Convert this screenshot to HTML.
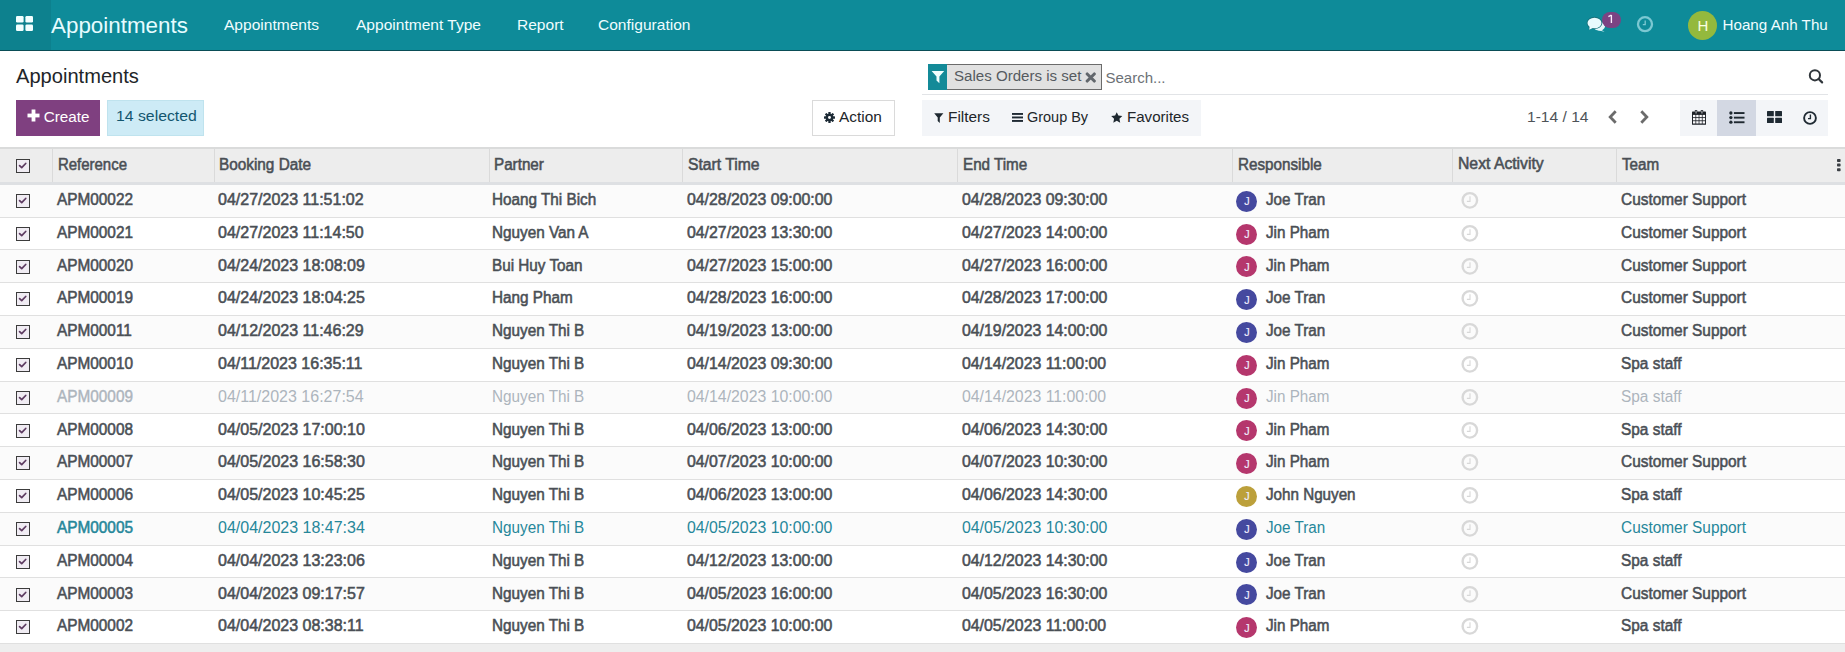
<!DOCTYPE html>
<html><head><meta charset="utf-8"><style>
*{box-sizing:border-box;margin:0;padding:0}
html,body{width:1845px;height:652px;overflow:hidden;background:#fff;font-family:"Liberation Sans",sans-serif;color:#4c4c4c;position:relative}
.abs{position:absolute}
.t{position:absolute;white-space:nowrap;transform-origin:0 0}
.nt{color:#f0fdff}
#nav{position:absolute;left:0;top:0;width:1845px;height:51px;background:#0e8b99;border-bottom:1px solid #0a4d56}
#apps{position:absolute;left:0;top:0;width:51px;height:50px;background:#0d818e}
#thead{position:absolute;left:0;top:147px;width:1845px;height:38px;background:#ededed;border-top:2px solid #dadbdb;border-bottom:3px solid #dee0e3}
.sep{position:absolute;top:149px;width:1px;height:33px;background:#dadada}
.row{position:absolute;left:0;width:1845px;background:#fff;border-bottom:1px solid #e0e0e0;box-sizing:content-box}
.row.odd{background:#fbfbfb}
.c{color:#4a4f55;-webkit-text-stroke:0.55px #4a4f55}
.dt{letter-spacing:0px}
.cb{position:absolute;left:16px;width:14px;height:14px}
.cb svg{display:block}
.av{position:absolute;left:1235.85px;width:21px;height:21px;border-radius:50%}
.avj{color:#f0efff;-webkit-text-stroke:0.15px #f0efff}
.avb{background:#45499f}.avr{background:#b5376d}.avy{background:#bca03b}
.clk{position:absolute;left:1461px;width:18px;height:18px}
.clk svg{display:block}
.row.muted .c{color:#adb5bd;-webkit-text-stroke:0}
.row.info .c{color:#26879a;-webkit-text-stroke:0}
.row.info .c1{-webkit-text-stroke:0.55px #26879a}
.row.muted .c1{-webkit-text-stroke:0.4px #adb5bd}
#bottom{position:absolute;left:0;top:644px;width:1845px;height:8px;background:#eeeeee}
</style></head><body>
<div id="nav"></div><div id="apps"><svg class="abs" style="left:16px;top:16px" width="17" height="15" viewBox="0 0 17 15"><rect x="0" y="0" width="7.6" height="6.6" rx="1.3" fill="#f2ffff"/><rect x="9.4" y="0" width="7.6" height="6.6" rx="1.3" fill="#f2ffff"/><rect x="0" y="8.4" width="7.6" height="6.6" rx="1.3" fill="#f2ffff"/><rect x="9.4" y="8.4" width="7.6" height="6.6" rx="1.3" fill="#f2ffff"/></svg></div>
<div class="t nt" style="left:51px;top:14.83px;font-size:22.4px;line-height:22.4px;color:#e6fcff">Appointments</div>
<div class="t nt" style="left:224.3px;top:17.81px;font-size:14.4px;line-height:14.4px;transform:scaleX(1.08);">Appointments</div>
<div class="t nt" style="left:356.3px;top:17.81px;font-size:14.4px;line-height:14.4px;transform:scaleX(1.08);">Appointment Type</div>
<div class="t nt" style="left:517.3px;top:17.81px;font-size:14.4px;line-height:14.4px;transform:scaleX(1.08);">Report</div>
<div class="t nt" style="left:598.3px;top:17.81px;font-size:14.4px;line-height:14.4px;transform:scaleX(1.08);">Configuration</div>
<svg class="abs" style="left:1585px;top:15px" width="22" height="18" viewBox="0 0 22 18"><ellipse cx="14.2" cy="11.2" rx="5.8" ry="4.4" fill="#e3f8fb"/><path d="M15.5 14.5 L19.6 16.8 L12.5 15.2 Z" fill="#e3f8fb"/><ellipse cx="9.5" cy="7.95" rx="7.9" ry="6.1" fill="#17707a"/><path d="M3.6 11 L3.9 15.1 L9.5 12.6 Z" fill="#17707a"/><ellipse cx="9.5" cy="7.95" rx="7" ry="5.25" fill="#e8fafd"/><path d="M4.6 11.5 L4.2 14.7 L8.8 12.6 Z" fill="#e8fafd"/></svg>
<div class="abs" style="left:1601.5px;top:12px;width:19px;height:15.5px;border-radius:8px;background:#7c4383"></div>
<svg class="abs" style="left:1606px;top:14px" width="8" height="10" viewBox="0 0 8 10"><path d="M5.4 0.9 V9.1 M5.4 1 L2.4 2.6" fill="none" stroke="#fbeafb" stroke-width="1.35"/></svg>
<svg class="abs" style="left:1636px;top:15px" width="18" height="18" viewBox="0 0 18 18"><circle cx="9" cy="9.2" r="7" fill="none" stroke="#7cc8d2" stroke-width="2.3"/><path d="M9.2 5.5 V9.6 H6.8" fill="none" stroke="#7cc8d2" stroke-width="1.3"/></svg>
<div class="abs" style="left:1688px;top:11px;width:29px;height:29px;border-radius:50%;background:#94b93d"></div>
<div class="t nt" style="left:1697.5px;top:18.20px;font-size:15px;line-height:15px;color:#fbffe0">H</div>
<div class="t nt" style="left:1722.5px;top:16.93px;font-size:15.2px;line-height:15.2px;">Hoang Anh Thu</div>
<div class="t " style="left:16px;top:65.98px;font-size:20.1px;line-height:20.1px;color:#212529">Appointments</div>
<div class="abs" style="left:16px;top:100px;width:84px;height:36px;background:#7f4080"></div>
<svg class="abs" style="left:27px;top:109px" width="13" height="13" viewBox="0 0 13 13"><rect x="4.6" y="0.5" width="3.8" height="12" fill="#fff"/><rect x="0.5" y="4.6" width="12" height="3.8" fill="#fff"/></svg>
<div class="t " style="left:43.8px;top:109.03px;font-size:15.2px;line-height:15.2px;color:#fff">Create</div>
<div class="abs" style="left:107px;top:100px;width:97px;height:36px;background:#cdebf6;border:1px solid #bfe3ee"></div>
<div class="t " style="left:116.2px;top:108.43px;font-size:15.2px;line-height:15.2px;transform:scaleX(1.04);color:#13566f">14 selected</div>
<div class="abs" style="left:812px;top:100px;width:83px;height:36px;background:#fff;border:1px solid #dadada"></div>
<svg class="abs" style="left:824px;top:112px" width="11" height="11" viewBox="0 0 12 12"><g fill="#1d2b36"><circle cx="6" cy="6" r="4.1"/><rect x="4.7" y="0" width="2.6" height="12" rx="0.6"/><rect x="0" y="4.7" width="12" height="2.6" rx="0.6"/><rect x="4.7" y="0" width="2.6" height="12" rx="0.6" transform="rotate(45 6 6)"/><rect x="4.7" y="0" width="2.6" height="12" rx="0.6" transform="rotate(-45 6 6)"/></g><circle cx="6" cy="6" r="1.6" fill="#fff"/></svg>
<div class="t " style="left:839px;top:108.76px;font-size:15.4px;line-height:15.4px;color:#212529">Action</div>
<div class="abs" style="left:922px;top:94px;width:906px;height:1px;background:#e2e4e7"></div>
<div class="abs" style="left:928px;top:64px;width:174px;height:26px;background:#e1e1e1;border:1px solid #6b6b6b;border-left:0"></div>
<div class="abs" style="left:928px;top:64px;width:19px;height:26px;background:#138a98"></div>
<svg class="abs" style="left:931px;top:70px" width="14" height="14" viewBox="0 0 14 14"><path d="M0.6 1 H13.2 L8.4 6.4 V13.2 L5.5 10.4 V6.4 Z" fill="#f0ffff"/></svg>
<div class="t " style="left:953.5px;top:67.96px;font-size:15.4px;line-height:15.4px;transform:scaleX(0.98);color:#555a5f">Sales Orders is set</div>
<svg class="abs" style="left:1085px;top:71.5px" width="11.5" height="11" viewBox="0 0 11.5 11"><path d="M2.2 2 L9.3 9 M9.3 2 L2.2 9" stroke="#62676c" stroke-width="3.1" stroke-linecap="round"/></svg>
<div class="t " style="left:1105.5px;top:69.90px;font-size:15px;line-height:15px;color:#6c7176">Search...</div>
<svg class="abs" style="left:1807px;top:67px" width="18" height="18" viewBox="0 0 18 18"><circle cx="7.9" cy="8.3" r="5.1" fill="none" stroke="#30363b" stroke-width="2"/><path d="M11.6 12 L15.1 15.4" stroke="#30363b" stroke-width="2.2" stroke-linecap="round"/></svg>
<div class="abs" style="left:922px;top:100px;width:279px;height:36px;background:#f3f5f8"></div>
<svg class="abs" style="left:933.5px;top:112.8px" width="10" height="10" viewBox="0 0 10 10"><path d="M0.2 0.2 H9.4 L5.8 4.6 V9.9 L3.7 7.9 V4.6 Z" fill="#1e2830"/></svg>
<div class="t " style="left:948px;top:108.66px;font-size:15.4px;line-height:15.4px;color:#212529">Filters</div>
<svg class="abs" style="left:1012px;top:113px" width="11" height="9" viewBox="0 0 11 9"><rect x="0" y="0" width="11" height="1.9" fill="#1f2a33"/><rect x="0" y="3.5" width="11" height="1.9" fill="#1f2a33"/><rect x="0" y="7" width="11" height="1.9" fill="#1f2a33"/></svg>
<div class="t " style="left:1027px;top:108.75px;font-size:15.3px;line-height:15.3px;transform:scaleX(0.945);color:#212529">Group By</div>
<svg class="abs" style="left:1111px;top:111.6px" width="11.5" height="11" viewBox="0 0 24 23"><path d="M12 0.3 L15.4 7.3 L23.6 8.3 L17.6 13.9 L19.2 22.4 L12 18.3 L4.8 22.4 L6.4 13.9 L0.4 8.3 L8.6 7.3 Z" fill="#1e2830"/></svg>
<div class="t " style="left:1126.7px;top:108.66px;font-size:15.4px;line-height:15.4px;transform:scaleX(0.98);color:#212529">Favorites</div>
<div class="t " style="left:1526.8px;top:108.93px;font-size:15.2px;line-height:15.2px;transform:scaleX(1.025);color:#4e5358">1-14 / 14</div>
<svg class="abs" style="left:1607px;top:110px" width="11" height="14" viewBox="0 0 11 14"><path d="M8.7 1.3 L3.2 7 L8.7 12.7" fill="none" stroke="#6b6b6b" stroke-width="2.8"/></svg>
<svg class="abs" style="left:1639px;top:110px" width="11" height="14" viewBox="0 0 11 14"><path d="M2.3 1.3 L7.8 7 L2.3 12.7" fill="none" stroke="#6b6b6b" stroke-width="2.8"/></svg>
<div class="abs" style="left:1680px;top:100px;width:148px;height:36px;background:#f3f5f8"></div>
<div class="abs" style="left:1717px;top:100px;width:39px;height:36px;background:#d3d8e3"></div>
<svg class="abs" style="left:1692px;top:110px" width="14" height="15" viewBox="0 0 14 15"><rect x="0" y="1.6" width="14" height="13.2" rx="0.6" fill="#1e2228"/><rect x="1.0" y="4.9" width="2.45" height="2.3" fill="#fbfbfd"/><rect x="1.0" y="8.05" width="2.45" height="2.3" fill="#fbfbfd"/><rect x="1.0" y="11.2" width="2.45" height="2.3" fill="#fbfbfd"/><rect x="4.2" y="4.9" width="2.45" height="2.3" fill="#fbfbfd"/><rect x="4.2" y="8.05" width="2.45" height="2.3" fill="#fbfbfd"/><rect x="4.2" y="11.2" width="2.45" height="2.3" fill="#fbfbfd"/><rect x="7.4" y="4.9" width="2.45" height="2.3" fill="#fbfbfd"/><rect x="7.4" y="8.05" width="2.45" height="2.3" fill="#fbfbfd"/><rect x="7.4" y="11.2" width="2.45" height="2.3" fill="#fbfbfd"/><rect x="10.6" y="4.9" width="2.45" height="2.3" fill="#fbfbfd"/><rect x="10.6" y="8.05" width="2.45" height="2.3" fill="#fbfbfd"/><rect x="10.6" y="11.2" width="2.45" height="2.3" fill="#fbfbfd"/><rect x="2.9" y="0" width="2.3" height="3.8" rx="0.6" fill="#1e2228"/><rect x="8.8" y="0" width="2.3" height="3.8" rx="0.6" fill="#1e2228"/><rect x="3.65" y="0.7" width="0.8" height="2.8" fill="#f3f5f8"/><rect x="9.55" y="0.7" width="0.8" height="2.8" fill="#f3f5f8"/></svg>
<svg class="abs" style="left:1728.5px;top:110.5px" width="17" height="14" viewBox="0 0 17 14"><circle cx="1.9" cy="2" r="1.65" fill="#1e2830"/><circle cx="1.9" cy="6.6" r="1.65" fill="#1e2830"/><circle cx="1.9" cy="11.2" r="1.65" fill="#1e2830"/><rect x="4.9" y="1.1" width="10.6" height="1.9" fill="#1e2830"/><rect x="4.9" y="5.7" width="10.6" height="1.9" fill="#1e2830"/><rect x="4.9" y="10.3" width="10.6" height="1.9" fill="#1e2830"/></svg>
<svg class="abs" style="left:1767px;top:111px" width="15" height="12" viewBox="0 0 15 12"><rect x="0" y="0" width="6.8" height="5.3" rx="0.5" fill="#1f2a33"/><rect x="8.2" y="0" width="6.8" height="5.3" rx="0.5" fill="#1f2a33"/><rect x="0" y="6.7" width="6.8" height="5.3" rx="0.5" fill="#1f2a33"/><rect x="8.2" y="6.7" width="6.8" height="5.3" rx="0.5" fill="#1f2a33"/></svg>
<svg class="abs" style="left:1803px;top:110.5px" width="14" height="14" viewBox="0 0 14 14"><circle cx="7" cy="7" r="5.9" fill="none" stroke="#1f2a33" stroke-width="1.9"/><path d="M7.4 3.6 V7.6 H5" fill="none" stroke="#1f2a33" stroke-width="1.4"/></svg>
<div id="thead"></div>
<div class="sep" style="left:52px"></div>
<div class="sep" style="left:214px"></div>
<div class="sep" style="left:489px"></div>
<div class="sep" style="left:682px"></div>
<div class="sep" style="left:957px"></div>
<div class="sep" style="left:1232px"></div>
<div class="sep" style="left:1452px"></div>
<div class="sep" style="left:1616px"></div>
<div class="cb" style="top:159px"><svg width="14" height="14" viewBox="0 0 14 14"><rect x="0.5" y="0.5" width="13" height="13" fill="#f0ecf3" stroke="#3c3c3c" stroke-width="1"/><path d="M3.6 6.6 L5.7 8.6 L9.7 4.5" fill="none" stroke="#5d3b61" stroke-width="1.75" stroke-linecap="round" stroke-linejoin="round"/></svg></div>
<div class="t c" style="left:57.7px;top:157.45px;font-size:16px;line-height:16px;transform:scaleX(0.934);">Reference</div>
<div class="t c" style="left:219px;top:157.45px;font-size:16px;line-height:16px;transform:scaleX(0.958);">Booking Date</div>
<div class="t c" style="left:494.4px;top:157.45px;font-size:16px;line-height:16px;transform:scaleX(0.95);">Partner</div>
<div class="t c" style="left:687.5px;top:157.45px;font-size:16px;line-height:16px;transform:scaleX(0.98);">Start Time</div>
<div class="t c" style="left:962.5px;top:157.45px;font-size:16px;line-height:16px;transform:scaleX(0.95);">End Time</div>
<div class="t c" style="left:1238px;top:157.45px;font-size:16px;line-height:16px;transform:scaleX(0.951);">Responsible</div>
<div class="t c" style="left:1458px;top:156.45px;font-size:16px;line-height:16px;transform:scaleX(0.984);">Next Activity</div>
<div class="t c" style="left:1621.5px;top:157.45px;font-size:16px;line-height:16px;transform:scaleX(0.95);">Team</div>
<svg class="abs" style="left:1836px;top:158px" width="6" height="14" viewBox="0 0 6 14"><rect x="1" y="1" width="3.6" height="3" rx="0.8" fill="#3b3f44"/><rect x="1" y="5.6" width="3.6" height="3" rx="0.8" fill="#3b3f44"/><rect x="1" y="10.2" width="3.6" height="3" rx="0.8" fill="#3b3f44"/></svg>
<div class="row odd" style="top:185px;height:32px"><div class="cb" style="top:9.00px"><svg width="14" height="14" viewBox="0 0 14 14"><rect x="0.5" y="0.5" width="13" height="13" fill="#f0ecf3" stroke="#3c3c3c" stroke-width="1"/><path d="M3.6 6.6 L5.7 8.6 L9.7 4.5" fill="none" stroke="#5d3b61" stroke-width="1.75" stroke-linecap="round" stroke-linejoin="round"/></svg></div><div class="t c c1" style="left:56.5px;top:7.45px;font-size:16px;line-height:16px;transform:scaleX(0.96);">APM00022</div><div class="t c dt" style="left:218px;top:7.45px;font-size:16px;line-height:16px;transform:scaleX(1.0);">04/27/2023 11:51:02</div><div class="t c" style="left:492.2px;top:7.45px;font-size:16px;line-height:16px;transform:scaleX(0.955);">Hoang Thi Bich</div><div class="t c dt" style="left:687px;top:7.45px;font-size:16px;line-height:16px;transform:scaleX(0.99);">04/28/2023 09:00:00</div><div class="t c dt" style="left:962px;top:7.45px;font-size:16px;line-height:16px;transform:scaleX(0.99);">04/28/2023 09:30:00</div><div class="av avb" style="top:5.70px"></div><div class="t avj" style="left:1244.3px;top:11.16px;font-size:10.8px;line-height:10.8px;">J</div><div class="clk" style="top:6.00px"><svg width="18" height="18" viewBox="0 0 18 18"><circle cx="8.85" cy="9.35" r="7.25" fill="none" stroke="#d8d8d8" stroke-width="2.4"/><path d="M9 5.2 V10.4 H5.9" fill="none" stroke="#d8d8d8" stroke-width="1.1"/></svg></div><div class="t c" style="left:1266px;top:7.45px;font-size:16px;line-height:16px;transform:scaleX(0.95);">Joe Tran</div><div class="t c" style="left:1621px;top:7.45px;font-size:16px;line-height:16px;transform:scaleX(0.963);">Customer Support</div></div>
<div class="row" style="top:218px;height:31px"><div class="cb" style="top:8.80px"><svg width="14" height="14" viewBox="0 0 14 14"><rect x="0.5" y="0.5" width="13" height="13" fill="#f0ecf3" stroke="#3c3c3c" stroke-width="1"/><path d="M3.6 6.6 L5.7 8.6 L9.7 4.5" fill="none" stroke="#5d3b61" stroke-width="1.75" stroke-linecap="round" stroke-linejoin="round"/></svg></div><div class="t c c1" style="left:56.5px;top:7.45px;font-size:16px;line-height:16px;transform:scaleX(0.96);">APM00021</div><div class="t c dt" style="left:218px;top:7.45px;font-size:16px;line-height:16px;transform:scaleX(1.0);">04/27/2023 11:14:50</div><div class="t c" style="left:492.2px;top:7.45px;font-size:16px;line-height:16px;transform:scaleX(0.955);">Nguyen Van A</div><div class="t c dt" style="left:687px;top:7.45px;font-size:16px;line-height:16px;transform:scaleX(0.99);">04/27/2023 13:30:00</div><div class="t c dt" style="left:962px;top:7.45px;font-size:16px;line-height:16px;transform:scaleX(0.99);">04/27/2023 14:00:00</div><div class="av avr" style="top:5.50px"></div><div class="t avj" style="left:1244.3px;top:10.96px;font-size:10.8px;line-height:10.8px;">J</div><div class="clk" style="top:5.80px"><svg width="18" height="18" viewBox="0 0 18 18"><circle cx="8.85" cy="9.35" r="7.25" fill="none" stroke="#d8d8d8" stroke-width="2.4"/><path d="M9 5.2 V10.4 H5.9" fill="none" stroke="#d8d8d8" stroke-width="1.1"/></svg></div><div class="t c" style="left:1266px;top:7.45px;font-size:16px;line-height:16px;transform:scaleX(0.95);">Jin Pham</div><div class="t c" style="left:1621px;top:7.45px;font-size:16px;line-height:16px;transform:scaleX(0.963);">Customer Support</div></div>
<div class="row odd" style="top:250px;height:32px"><div class="cb" style="top:9.60px"><svg width="14" height="14" viewBox="0 0 14 14"><rect x="0.5" y="0.5" width="13" height="13" fill="#f0ecf3" stroke="#3c3c3c" stroke-width="1"/><path d="M3.6 6.6 L5.7 8.6 L9.7 4.5" fill="none" stroke="#5d3b61" stroke-width="1.75" stroke-linecap="round" stroke-linejoin="round"/></svg></div><div class="t c c1" style="left:56.5px;top:8.45px;font-size:16px;line-height:16px;transform:scaleX(0.96);">APM00020</div><div class="t c dt" style="left:218px;top:8.45px;font-size:16px;line-height:16px;transform:scaleX(1.0);">04/24/2023 18:08:09</div><div class="t c" style="left:492.2px;top:8.45px;font-size:16px;line-height:16px;transform:scaleX(0.955);">Bui Huy Toan</div><div class="t c dt" style="left:687px;top:8.45px;font-size:16px;line-height:16px;transform:scaleX(0.99);">04/27/2023 15:00:00</div><div class="t c dt" style="left:962px;top:8.45px;font-size:16px;line-height:16px;transform:scaleX(0.99);">04/27/2023 16:00:00</div><div class="av avr" style="top:6.30px"></div><div class="t avj" style="left:1244.3px;top:11.76px;font-size:10.8px;line-height:10.8px;">J</div><div class="clk" style="top:6.60px"><svg width="18" height="18" viewBox="0 0 18 18"><circle cx="8.85" cy="9.35" r="7.25" fill="none" stroke="#d8d8d8" stroke-width="2.4"/><path d="M9 5.2 V10.4 H5.9" fill="none" stroke="#d8d8d8" stroke-width="1.1"/></svg></div><div class="t c" style="left:1266px;top:8.45px;font-size:16px;line-height:16px;transform:scaleX(0.95);">Jin Pham</div><div class="t c" style="left:1621px;top:8.45px;font-size:16px;line-height:16px;transform:scaleX(0.963);">Customer Support</div></div>
<div class="row" style="top:283px;height:32px"><div class="cb" style="top:9.40px"><svg width="14" height="14" viewBox="0 0 14 14"><rect x="0.5" y="0.5" width="13" height="13" fill="#f0ecf3" stroke="#3c3c3c" stroke-width="1"/><path d="M3.6 6.6 L5.7 8.6 L9.7 4.5" fill="none" stroke="#5d3b61" stroke-width="1.75" stroke-linecap="round" stroke-linejoin="round"/></svg></div><div class="t c c1" style="left:56.5px;top:7.45px;font-size:16px;line-height:16px;transform:scaleX(0.96);">APM00019</div><div class="t c dt" style="left:218px;top:7.45px;font-size:16px;line-height:16px;transform:scaleX(1.0);">04/24/2023 18:04:25</div><div class="t c" style="left:492.2px;top:7.45px;font-size:16px;line-height:16px;transform:scaleX(0.955);">Hang Pham</div><div class="t c dt" style="left:687px;top:7.45px;font-size:16px;line-height:16px;transform:scaleX(0.99);">04/28/2023 16:00:00</div><div class="t c dt" style="left:962px;top:7.45px;font-size:16px;line-height:16px;transform:scaleX(0.99);">04/28/2023 17:00:00</div><div class="av avb" style="top:6.10px"></div><div class="t avj" style="left:1244.3px;top:11.56px;font-size:10.8px;line-height:10.8px;">J</div><div class="clk" style="top:6.40px"><svg width="18" height="18" viewBox="0 0 18 18"><circle cx="8.85" cy="9.35" r="7.25" fill="none" stroke="#d8d8d8" stroke-width="2.4"/><path d="M9 5.2 V10.4 H5.9" fill="none" stroke="#d8d8d8" stroke-width="1.1"/></svg></div><div class="t c" style="left:1266px;top:7.45px;font-size:16px;line-height:16px;transform:scaleX(0.95);">Joe Tran</div><div class="t c" style="left:1621px;top:7.45px;font-size:16px;line-height:16px;transform:scaleX(0.963);">Customer Support</div></div>
<div class="row odd" style="top:316px;height:32px"><div class="cb" style="top:9.20px"><svg width="14" height="14" viewBox="0 0 14 14"><rect x="0.5" y="0.5" width="13" height="13" fill="#f0ecf3" stroke="#3c3c3c" stroke-width="1"/><path d="M3.6 6.6 L5.7 8.6 L9.7 4.5" fill="none" stroke="#5d3b61" stroke-width="1.75" stroke-linecap="round" stroke-linejoin="round"/></svg></div><div class="t c c1" style="left:56.5px;top:7.45px;font-size:16px;line-height:16px;transform:scaleX(0.96);">APM00011</div><div class="t c dt" style="left:218px;top:7.45px;font-size:16px;line-height:16px;transform:scaleX(1.0);">04/12/2023 11:46:29</div><div class="t c" style="left:492.2px;top:7.45px;font-size:16px;line-height:16px;transform:scaleX(0.955);">Nguyen Thi B</div><div class="t c dt" style="left:687px;top:7.45px;font-size:16px;line-height:16px;transform:scaleX(0.99);">04/19/2023 13:00:00</div><div class="t c dt" style="left:962px;top:7.45px;font-size:16px;line-height:16px;transform:scaleX(0.99);">04/19/2023 14:00:00</div><div class="av avb" style="top:5.90px"></div><div class="t avj" style="left:1244.3px;top:11.36px;font-size:10.8px;line-height:10.8px;">J</div><div class="clk" style="top:6.20px"><svg width="18" height="18" viewBox="0 0 18 18"><circle cx="8.85" cy="9.35" r="7.25" fill="none" stroke="#d8d8d8" stroke-width="2.4"/><path d="M9 5.2 V10.4 H5.9" fill="none" stroke="#d8d8d8" stroke-width="1.1"/></svg></div><div class="t c" style="left:1266px;top:7.45px;font-size:16px;line-height:16px;transform:scaleX(0.95);">Joe Tran</div><div class="t c" style="left:1621px;top:7.45px;font-size:16px;line-height:16px;transform:scaleX(0.963);">Customer Support</div></div>
<div class="row" style="top:349px;height:32px"><div class="cb" style="top:9.00px"><svg width="14" height="14" viewBox="0 0 14 14"><rect x="0.5" y="0.5" width="13" height="13" fill="#f0ecf3" stroke="#3c3c3c" stroke-width="1"/><path d="M3.6 6.6 L5.7 8.6 L9.7 4.5" fill="none" stroke="#5d3b61" stroke-width="1.75" stroke-linecap="round" stroke-linejoin="round"/></svg></div><div class="t c c1" style="left:56.5px;top:7.45px;font-size:16px;line-height:16px;transform:scaleX(0.96);">APM00010</div><div class="t c dt" style="left:218px;top:7.45px;font-size:16px;line-height:16px;transform:scaleX(1.0);">04/11/2023 16:35:11</div><div class="t c" style="left:492.2px;top:7.45px;font-size:16px;line-height:16px;transform:scaleX(0.955);">Nguyen Thi B</div><div class="t c dt" style="left:687px;top:7.45px;font-size:16px;line-height:16px;transform:scaleX(0.99);">04/14/2023 09:30:00</div><div class="t c dt" style="left:962px;top:7.45px;font-size:16px;line-height:16px;transform:scaleX(0.99);">04/14/2023 11:00:00</div><div class="av avr" style="top:5.70px"></div><div class="t avj" style="left:1244.3px;top:11.16px;font-size:10.8px;line-height:10.8px;">J</div><div class="clk" style="top:6.00px"><svg width="18" height="18" viewBox="0 0 18 18"><circle cx="8.85" cy="9.35" r="7.25" fill="none" stroke="#d8d8d8" stroke-width="2.4"/><path d="M9 5.2 V10.4 H5.9" fill="none" stroke="#d8d8d8" stroke-width="1.1"/></svg></div><div class="t c" style="left:1266px;top:7.45px;font-size:16px;line-height:16px;transform:scaleX(0.95);">Jin Pham</div><div class="t c" style="left:1621px;top:7.45px;font-size:16px;line-height:16px;transform:scaleX(0.963);">Spa staff</div></div>
<div class="row odd muted" style="top:382px;height:31px"><div class="cb" style="top:8.80px"><svg width="14" height="14" viewBox="0 0 14 14"><rect x="0.5" y="0.5" width="13" height="13" fill="#f0ecf3" stroke="#3c3c3c" stroke-width="1"/><path d="M3.6 6.6 L5.7 8.6 L9.7 4.5" fill="none" stroke="#5d3b61" stroke-width="1.75" stroke-linecap="round" stroke-linejoin="round"/></svg></div><div class="t c c1" style="left:56.5px;top:7.45px;font-size:16px;line-height:16px;transform:scaleX(0.96);">APM00009</div><div class="t c dt" style="left:218px;top:7.45px;font-size:16px;line-height:16px;transform:scaleX(1.0);">04/11/2023 16:27:54</div><div class="t c" style="left:492.2px;top:7.45px;font-size:16px;line-height:16px;transform:scaleX(0.955);">Nguyen Thi B</div><div class="t c dt" style="left:687px;top:7.45px;font-size:16px;line-height:16px;transform:scaleX(0.99);">04/14/2023 10:00:00</div><div class="t c dt" style="left:962px;top:7.45px;font-size:16px;line-height:16px;transform:scaleX(0.99);">04/14/2023 11:00:00</div><div class="av avr" style="top:5.50px"></div><div class="t avj" style="left:1244.3px;top:10.96px;font-size:10.8px;line-height:10.8px;">J</div><div class="clk" style="top:5.80px"><svg width="18" height="18" viewBox="0 0 18 18"><circle cx="8.85" cy="9.35" r="7.25" fill="none" stroke="#d8d8d8" stroke-width="2.4"/><path d="M9 5.2 V10.4 H5.9" fill="none" stroke="#d8d8d8" stroke-width="1.1"/></svg></div><div class="t c" style="left:1266px;top:7.45px;font-size:16px;line-height:16px;transform:scaleX(0.95);">Jin Pham</div><div class="t c" style="left:1621px;top:7.45px;font-size:16px;line-height:16px;transform:scaleX(0.963);">Spa staff</div></div>
<div class="row" style="top:414px;height:32px"><div class="cb" style="top:9.60px"><svg width="14" height="14" viewBox="0 0 14 14"><rect x="0.5" y="0.5" width="13" height="13" fill="#f0ecf3" stroke="#3c3c3c" stroke-width="1"/><path d="M3.6 6.6 L5.7 8.6 L9.7 4.5" fill="none" stroke="#5d3b61" stroke-width="1.75" stroke-linecap="round" stroke-linejoin="round"/></svg></div><div class="t c c1" style="left:56.5px;top:8.45px;font-size:16px;line-height:16px;transform:scaleX(0.96);">APM00008</div><div class="t c dt" style="left:218px;top:8.45px;font-size:16px;line-height:16px;transform:scaleX(1.0);">04/05/2023 17:00:10</div><div class="t c" style="left:492.2px;top:8.45px;font-size:16px;line-height:16px;transform:scaleX(0.955);">Nguyen Thi B</div><div class="t c dt" style="left:687px;top:8.45px;font-size:16px;line-height:16px;transform:scaleX(0.99);">04/06/2023 13:00:00</div><div class="t c dt" style="left:962px;top:8.45px;font-size:16px;line-height:16px;transform:scaleX(0.99);">04/06/2023 14:30:00</div><div class="av avr" style="top:6.30px"></div><div class="t avj" style="left:1244.3px;top:11.76px;font-size:10.8px;line-height:10.8px;">J</div><div class="clk" style="top:6.60px"><svg width="18" height="18" viewBox="0 0 18 18"><circle cx="8.85" cy="9.35" r="7.25" fill="none" stroke="#d8d8d8" stroke-width="2.4"/><path d="M9 5.2 V10.4 H5.9" fill="none" stroke="#d8d8d8" stroke-width="1.1"/></svg></div><div class="t c" style="left:1266px;top:8.45px;font-size:16px;line-height:16px;transform:scaleX(0.95);">Jin Pham</div><div class="t c" style="left:1621px;top:8.45px;font-size:16px;line-height:16px;transform:scaleX(0.963);">Spa staff</div></div>
<div class="row odd" style="top:447px;height:32px"><div class="cb" style="top:9.40px"><svg width="14" height="14" viewBox="0 0 14 14"><rect x="0.5" y="0.5" width="13" height="13" fill="#f0ecf3" stroke="#3c3c3c" stroke-width="1"/><path d="M3.6 6.6 L5.7 8.6 L9.7 4.5" fill="none" stroke="#5d3b61" stroke-width="1.75" stroke-linecap="round" stroke-linejoin="round"/></svg></div><div class="t c c1" style="left:56.5px;top:7.45px;font-size:16px;line-height:16px;transform:scaleX(0.96);">APM00007</div><div class="t c dt" style="left:218px;top:7.45px;font-size:16px;line-height:16px;transform:scaleX(1.0);">04/05/2023 16:58:30</div><div class="t c" style="left:492.2px;top:7.45px;font-size:16px;line-height:16px;transform:scaleX(0.955);">Nguyen Thi B</div><div class="t c dt" style="left:687px;top:7.45px;font-size:16px;line-height:16px;transform:scaleX(0.99);">04/07/2023 10:00:00</div><div class="t c dt" style="left:962px;top:7.45px;font-size:16px;line-height:16px;transform:scaleX(0.99);">04/07/2023 10:30:00</div><div class="av avr" style="top:6.10px"></div><div class="t avj" style="left:1244.3px;top:11.56px;font-size:10.8px;line-height:10.8px;">J</div><div class="clk" style="top:6.40px"><svg width="18" height="18" viewBox="0 0 18 18"><circle cx="8.85" cy="9.35" r="7.25" fill="none" stroke="#d8d8d8" stroke-width="2.4"/><path d="M9 5.2 V10.4 H5.9" fill="none" stroke="#d8d8d8" stroke-width="1.1"/></svg></div><div class="t c" style="left:1266px;top:7.45px;font-size:16px;line-height:16px;transform:scaleX(0.95);">Jin Pham</div><div class="t c" style="left:1621px;top:7.45px;font-size:16px;line-height:16px;transform:scaleX(0.963);">Customer Support</div></div>
<div class="row" style="top:480px;height:32px"><div class="cb" style="top:9.20px"><svg width="14" height="14" viewBox="0 0 14 14"><rect x="0.5" y="0.5" width="13" height="13" fill="#f0ecf3" stroke="#3c3c3c" stroke-width="1"/><path d="M3.6 6.6 L5.7 8.6 L9.7 4.5" fill="none" stroke="#5d3b61" stroke-width="1.75" stroke-linecap="round" stroke-linejoin="round"/></svg></div><div class="t c c1" style="left:56.5px;top:7.45px;font-size:16px;line-height:16px;transform:scaleX(0.96);">APM00006</div><div class="t c dt" style="left:218px;top:7.45px;font-size:16px;line-height:16px;transform:scaleX(1.0);">04/05/2023 10:45:25</div><div class="t c" style="left:492.2px;top:7.45px;font-size:16px;line-height:16px;transform:scaleX(0.955);">Nguyen Thi B</div><div class="t c dt" style="left:687px;top:7.45px;font-size:16px;line-height:16px;transform:scaleX(0.99);">04/06/2023 13:00:00</div><div class="t c dt" style="left:962px;top:7.45px;font-size:16px;line-height:16px;transform:scaleX(0.99);">04/06/2023 14:30:00</div><div class="av avy" style="top:5.90px"></div><div class="t avj" style="left:1244.3px;top:11.36px;font-size:10.8px;line-height:10.8px;">J</div><div class="clk" style="top:6.20px"><svg width="18" height="18" viewBox="0 0 18 18"><circle cx="8.85" cy="9.35" r="7.25" fill="none" stroke="#d8d8d8" stroke-width="2.4"/><path d="M9 5.2 V10.4 H5.9" fill="none" stroke="#d8d8d8" stroke-width="1.1"/></svg></div><div class="t c" style="left:1266px;top:7.45px;font-size:16px;line-height:16px;transform:scaleX(0.95);">John Nguyen</div><div class="t c" style="left:1621px;top:7.45px;font-size:16px;line-height:16px;transform:scaleX(0.963);">Spa staff</div></div>
<div class="row odd info" style="top:513px;height:32px"><div class="cb" style="top:9.00px"><svg width="14" height="14" viewBox="0 0 14 14"><rect x="0.5" y="0.5" width="13" height="13" fill="#f0ecf3" stroke="#3c3c3c" stroke-width="1"/><path d="M3.6 6.6 L5.7 8.6 L9.7 4.5" fill="none" stroke="#5d3b61" stroke-width="1.75" stroke-linecap="round" stroke-linejoin="round"/></svg></div><div class="t c c1" style="left:56.5px;top:7.45px;font-size:16px;line-height:16px;transform:scaleX(0.96);">APM00005</div><div class="t c dt" style="left:218px;top:7.45px;font-size:16px;line-height:16px;transform:scaleX(1.0);">04/04/2023 18:47:34</div><div class="t c" style="left:492.2px;top:7.45px;font-size:16px;line-height:16px;transform:scaleX(0.955);">Nguyen Thi B</div><div class="t c dt" style="left:687px;top:7.45px;font-size:16px;line-height:16px;transform:scaleX(0.99);">04/05/2023 10:00:00</div><div class="t c dt" style="left:962px;top:7.45px;font-size:16px;line-height:16px;transform:scaleX(0.99);">04/05/2023 10:30:00</div><div class="av avb" style="top:5.70px"></div><div class="t avj" style="left:1244.3px;top:11.16px;font-size:10.8px;line-height:10.8px;">J</div><div class="clk" style="top:6.00px"><svg width="18" height="18" viewBox="0 0 18 18"><circle cx="8.85" cy="9.35" r="7.25" fill="none" stroke="#d8d8d8" stroke-width="2.4"/><path d="M9 5.2 V10.4 H5.9" fill="none" stroke="#d8d8d8" stroke-width="1.1"/></svg></div><div class="t c" style="left:1266px;top:7.45px;font-size:16px;line-height:16px;transform:scaleX(0.95);">Joe Tran</div><div class="t c" style="left:1621px;top:7.45px;font-size:16px;line-height:16px;transform:scaleX(0.963);">Customer Support</div></div>
<div class="row" style="top:546px;height:31px"><div class="cb" style="top:8.80px"><svg width="14" height="14" viewBox="0 0 14 14"><rect x="0.5" y="0.5" width="13" height="13" fill="#f0ecf3" stroke="#3c3c3c" stroke-width="1"/><path d="M3.6 6.6 L5.7 8.6 L9.7 4.5" fill="none" stroke="#5d3b61" stroke-width="1.75" stroke-linecap="round" stroke-linejoin="round"/></svg></div><div class="t c c1" style="left:56.5px;top:7.45px;font-size:16px;line-height:16px;transform:scaleX(0.96);">APM00004</div><div class="t c dt" style="left:218px;top:7.45px;font-size:16px;line-height:16px;transform:scaleX(1.0);">04/04/2023 13:23:06</div><div class="t c" style="left:492.2px;top:7.45px;font-size:16px;line-height:16px;transform:scaleX(0.955);">Nguyen Thi B</div><div class="t c dt" style="left:687px;top:7.45px;font-size:16px;line-height:16px;transform:scaleX(0.99);">04/12/2023 13:00:00</div><div class="t c dt" style="left:962px;top:7.45px;font-size:16px;line-height:16px;transform:scaleX(0.99);">04/12/2023 14:30:00</div><div class="av avb" style="top:5.50px"></div><div class="t avj" style="left:1244.3px;top:10.96px;font-size:10.8px;line-height:10.8px;">J</div><div class="clk" style="top:5.80px"><svg width="18" height="18" viewBox="0 0 18 18"><circle cx="8.85" cy="9.35" r="7.25" fill="none" stroke="#d8d8d8" stroke-width="2.4"/><path d="M9 5.2 V10.4 H5.9" fill="none" stroke="#d8d8d8" stroke-width="1.1"/></svg></div><div class="t c" style="left:1266px;top:7.45px;font-size:16px;line-height:16px;transform:scaleX(0.95);">Joe Tran</div><div class="t c" style="left:1621px;top:7.45px;font-size:16px;line-height:16px;transform:scaleX(0.963);">Spa staff</div></div>
<div class="row odd" style="top:578px;height:32px"><div class="cb" style="top:9.60px"><svg width="14" height="14" viewBox="0 0 14 14"><rect x="0.5" y="0.5" width="13" height="13" fill="#f0ecf3" stroke="#3c3c3c" stroke-width="1"/><path d="M3.6 6.6 L5.7 8.6 L9.7 4.5" fill="none" stroke="#5d3b61" stroke-width="1.75" stroke-linecap="round" stroke-linejoin="round"/></svg></div><div class="t c c1" style="left:56.5px;top:8.45px;font-size:16px;line-height:16px;transform:scaleX(0.96);">APM00003</div><div class="t c dt" style="left:218px;top:8.45px;font-size:16px;line-height:16px;transform:scaleX(1.0);">04/04/2023 09:17:57</div><div class="t c" style="left:492.2px;top:8.45px;font-size:16px;line-height:16px;transform:scaleX(0.955);">Nguyen Thi B</div><div class="t c dt" style="left:687px;top:8.45px;font-size:16px;line-height:16px;transform:scaleX(0.99);">04/05/2023 16:00:00</div><div class="t c dt" style="left:962px;top:8.45px;font-size:16px;line-height:16px;transform:scaleX(0.99);">04/05/2023 16:30:00</div><div class="av avb" style="top:6.30px"></div><div class="t avj" style="left:1244.3px;top:11.76px;font-size:10.8px;line-height:10.8px;">J</div><div class="clk" style="top:6.60px"><svg width="18" height="18" viewBox="0 0 18 18"><circle cx="8.85" cy="9.35" r="7.25" fill="none" stroke="#d8d8d8" stroke-width="2.4"/><path d="M9 5.2 V10.4 H5.9" fill="none" stroke="#d8d8d8" stroke-width="1.1"/></svg></div><div class="t c" style="left:1266px;top:8.45px;font-size:16px;line-height:16px;transform:scaleX(0.95);">Joe Tran</div><div class="t c" style="left:1621px;top:8.45px;font-size:16px;line-height:16px;transform:scaleX(0.963);">Customer Support</div></div>
<div class="row" style="top:611px;height:32px"><div class="cb" style="top:9.40px"><svg width="14" height="14" viewBox="0 0 14 14"><rect x="0.5" y="0.5" width="13" height="13" fill="#f0ecf3" stroke="#3c3c3c" stroke-width="1"/><path d="M3.6 6.6 L5.7 8.6 L9.7 4.5" fill="none" stroke="#5d3b61" stroke-width="1.75" stroke-linecap="round" stroke-linejoin="round"/></svg></div><div class="t c c1" style="left:56.5px;top:7.45px;font-size:16px;line-height:16px;transform:scaleX(0.96);">APM00002</div><div class="t c dt" style="left:218px;top:7.45px;font-size:16px;line-height:16px;transform:scaleX(1.0);">04/04/2023 08:38:11</div><div class="t c" style="left:492.2px;top:7.45px;font-size:16px;line-height:16px;transform:scaleX(0.955);">Nguyen Thi B</div><div class="t c dt" style="left:687px;top:7.45px;font-size:16px;line-height:16px;transform:scaleX(0.99);">04/05/2023 10:00:00</div><div class="t c dt" style="left:962px;top:7.45px;font-size:16px;line-height:16px;transform:scaleX(0.99);">04/05/2023 11:00:00</div><div class="av avr" style="top:6.10px"></div><div class="t avj" style="left:1244.3px;top:11.56px;font-size:10.8px;line-height:10.8px;">J</div><div class="clk" style="top:6.40px"><svg width="18" height="18" viewBox="0 0 18 18"><circle cx="8.85" cy="9.35" r="7.25" fill="none" stroke="#d8d8d8" stroke-width="2.4"/><path d="M9 5.2 V10.4 H5.9" fill="none" stroke="#d8d8d8" stroke-width="1.1"/></svg></div><div class="t c" style="left:1266px;top:7.45px;font-size:16px;line-height:16px;transform:scaleX(0.95);">Jin Pham</div><div class="t c" style="left:1621px;top:7.45px;font-size:16px;line-height:16px;transform:scaleX(0.963);">Spa staff</div></div>
<div id="bottom"></div>
</body></html>
